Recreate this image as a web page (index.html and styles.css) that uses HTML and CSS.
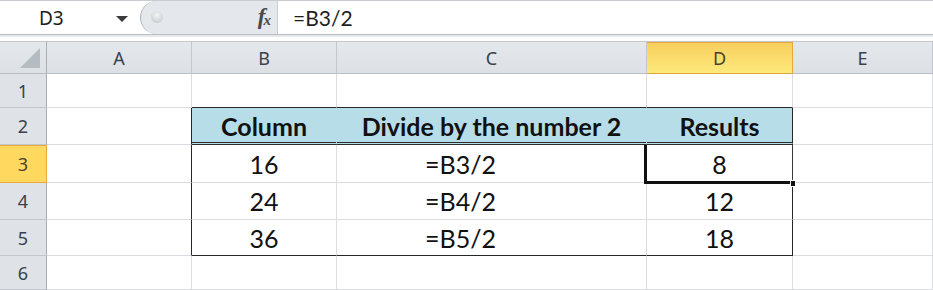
FILE: index.html
```html
<!DOCTYPE html>
<html lang="en">
<head>
    <meta charset="UTF-8">
    <meta name="viewport" content="width=device-width, initial-scale=1.0">
    <title>Divide by 2</title>
    <link rel="stylesheet" href="styles.css">
</head>
<body>
    <div class="formula-bar">
        <div class="name-box">
            <span class="cell-ref">D3</span>
            <span class="drop"></span>
        </div>
        <div class="fx-area">
            <span class="knob"></span>
            <span class="fx">f<sub>x</sub></span>
        </div>
        <div class="formula">=B3/2</div>
    </div>
    <div class="bar-gap"></div>

    <div class="sheet">
        <!-- column headers -->
        <div class="hd corner"><span class="tri"></span></div>
        <div class="hd">A</div>
        <div class="hd">B</div>
        <div class="hd">C</div>
        <div class="hd hd-active">D</div>
        <div class="hd">E</div>

        <!-- row 1 -->
        <div class="rh">1</div>
        <div class="c"></div>
        <div class="c t-top"></div>
        <div class="c t-top"></div>
        <div class="c t-top"></div>
        <div class="c"></div>

        <!-- row 2: table header -->
        <div class="rh">2</div>
        <div class="c t-left"></div>
        <div class="c t-head">Column</div>
        <div class="c t-head">Divide by the number 2</div>
        <div class="c t-head t-right">Results</div>
        <div class="c"></div>

        <!-- row 3 -->
        <div class="rh rh-active">3</div>
        <div class="c t-left"></div>
        <div class="c">16</div>
        <div class="c txt">=B3/2</div>
        <div class="c t-right sel">8<span class="handle"></span></div>
        <div class="c"></div>

        <!-- row 4 -->
        <div class="rh">4</div>
        <div class="c t-left"></div>
        <div class="c">24</div>
        <div class="c txt">=B4/2</div>
        <div class="c t-right">12</div>
        <div class="c"></div>

        <!-- row 5 -->
        <div class="rh">5</div>
        <div class="c t-left"></div>
        <div class="c t-bottom">36</div>
        <div class="c txt t-bottom">=B5/2</div>
        <div class="c t-right t-bottom">18</div>
        <div class="c"></div>

        <!-- row 6 -->
        <div class="rh">6</div>
        <div class="c"></div>
        <div class="c"></div>
        <div class="c"></div>
        <div class="c"></div>
        <div class="c"></div>
    </div>
</body>
</html>
```

FILE: styles.css
```css
* {
    box-sizing: border-box;
}
body {
    margin: 0;
    width: 933px;
    height: 290px;
    overflow: hidden;
    background-color: #ffffff;
    font-family: 'Lato', 'Open Sans', sans-serif;
}

/* formula bar */
.formula-bar {
    display: flex;
    height: 35px;
    border-top: 1px solid #c9cdd2;
    border-bottom: 1px solid #b9bec5;
    background-color: #ffffff;
}
.name-box {
    width: 140px;
    display: flex;
    align-items: center;
    padding-left: 39px;
    position: relative;
}
.cell-ref {
    font-family: 'Noto Sans', sans-serif;
    font-size: 19px;
    color: #1e1e1e;
}
.drop {
    position: absolute;
    left: 116px;
    top: 15px;
    width: 0;
    height: 0;
    border-left: 6px solid transparent;
    border-right: 6px solid transparent;
    border-top: 6px solid #3b3b3b;
}
.fx-area {
    width: 138px;
    display: flex;
    align-items: center;
    justify-content: space-between;
    padding: 0 8px 0 10px;
    background-color: #e4e7eb;
    border: 1px solid #aab0b8;
    border-right-color: #c9cdd2;
    border-top: none;
    border-bottom: none;
    border-radius: 17px 0 0 17px;
}
.knob {
    width: 12px;
    height: 12px;
    border-radius: 50%;
    background: radial-gradient(circle at 50% 35%, #f4f4f4, #bfc3c8);
    margin-bottom: 2px;
}
.fx {
    font-family: 'Liberation Serif', serif;
    font-style: italic;
    font-weight: bold;
    font-size: 23px;
    color: #4a4a4a;
    letter-spacing: -2px;
    margin-bottom: 2px;
}
.fx sub {
    font-size: 15px;
    vertical-align: -1px;
}
.formula {
    flex: 1;
    display: flex;
    align-items: center;
    padding-left: 15px;
    font-size: 21px;
    color: #1e1e1e;
}
.bar-gap {
    height: 7px;
    background-color: #ffffff;
    border-top: 2px solid #e6e8eb;
    border-bottom: 1px solid #c4c8cd;
}

/* grid */
.sheet {
    display: grid;
    grid-template-columns: 47px 145px 145px 310px 146px 1fr;
    grid-template-rows: 32px 34px 37px 38px 37px 36px 1fr;
    height: 248px;
}
.hd, .rh {
    display: flex;
    align-items: center;
    justify-content: center;
    background: linear-gradient(#e4e7eb, #dde1e6);
    color: #38414c;
    font-family: 'Noto Sans', sans-serif;
    font-size: 18px;
    border-right: 1px solid #c4c8ce;
    border-bottom: 1px solid #b9bec5;
}
.rh {
    border-right-color: #a9aeb5;
    border-bottom-color: #c4c8ce;
    background: #dfe3e8;
}
.corner {
    position: relative;
    border-right-color: #a9aeb5;
}
.tri {
    position: absolute;
    right: 6px;
    bottom: 5px;
    width: 0;
    height: 0;
    border-left: 20px solid transparent;
    border-bottom: 20px solid #b5bbc3;
}
.hd-active {
    background: linear-gradient(#f8cf5e, #fde97c);
    border: 1px solid #e8a83c;
    border-left-width: 0;
    color: #4b4030;
}
.rh-active {
    background: #ffd85f;
    border: 1px solid #e8a83c;
    border-left: none;
    color: #4b4030;
}
.c {
    border-right: 1px solid #dadcdf;
    border-bottom: 1px solid #dadcdf;
    display: flex;
    align-items: center;
    justify-content: center;
    font-size: 25px;
    color: #111111;
}
/* formula strings sit a little left of centre */
.txt {
    padding-right: 62px;
}

/* bordered table B2:D5 */
.t-top {
    border-bottom: 1px solid #262626;
}
.t-left {
    border-right: 1px solid #262626;
}
.t-right {
    border-right: 1px solid #262626;
}
.t-bottom {
    border-bottom: 1px solid #262626;
}
.t-head {
    background-color: #b7dde8;
    font-weight: bold;
    border-right-color: #b7dde8;
    border-bottom: 3px double #2b2b2b;
    padding-top: 2px;
}
.t-head.t-right {
    border-right-color: #262626;
}

/* active cell */
.sel {
    position: relative;
}
.sel::after {
    content: "";
    position: absolute;
    left: -3px;
    top: 0;
    right: -1px;
    bottom: -2px;
    border-left: 3px solid #111111;
    border-bottom: 3px solid #111111;
    border-right: 1px solid #3a3a3a;
}
.handle {
    position: absolute;
    right: -4px;
    bottom: -5px;
    width: 6px;
    height: 7px;
    background-color: #111111;
    border: 1px solid #ffffff;
    z-index: 1;
}
```
